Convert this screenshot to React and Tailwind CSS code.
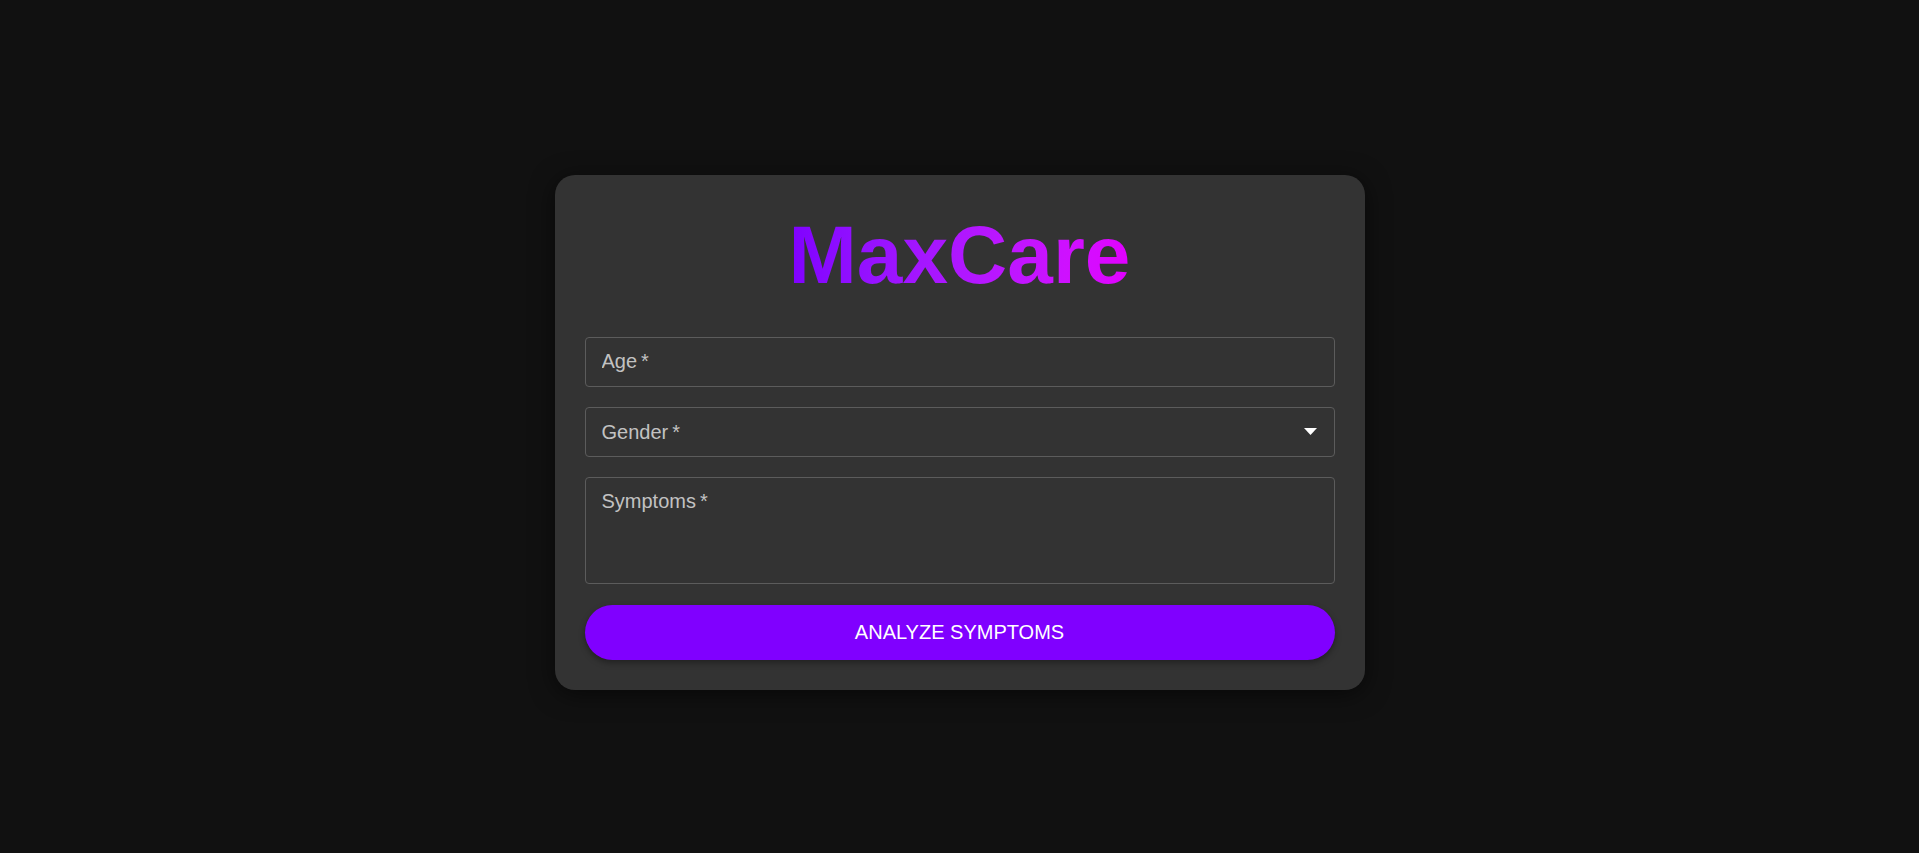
import React, { useState } from 'react';

const font = { fontFamily: '"Liberation Sans", Arial, sans-serif' };

const fieldBox =
  'w-full rounded-[4px] border border-[#5c5c5c] bg-transparent text-[20px] text-[#e0e0e0] outline-none placeholder:text-[#c2c2c2]';

const App = () => {
  const [age, setAge] = useState('');
  const [symptoms, setSymptoms] = useState('');

  return (
    <div
      className="flex min-h-screen items-center justify-center bg-[#111111] pt-[12px]"
      style={font}
    >
      <div className="w-[810px] rounded-[20px] bg-[#333333] p-[30px] shadow-[0_4px_24px_rgba(0,0,0,0.55)]">
        <h1 className="mb-[31px] text-center text-[82px] font-bold leading-[1.23]">
          <span className="inline-block bg-gradient-to-r from-[#7f00ff] to-[#e100ff] bg-clip-text text-transparent">
            MaxCare
          </span>
        </h1>

        <form
          className="flex flex-col gap-[20px]"
          onSubmit={(event) => event.preventDefault()}
        >
          <input
            className={`${fieldBox} h-[50px] px-[16px]`}
            placeholder={'Age\u2009*'}
            value={age}
            onChange={(event) => setAge(event.target.value)}
          />

          <div className="flex h-[50px] w-full items-center justify-between rounded-[4px] border border-[#5c5c5c] pl-[16px] pr-[17px]">
            <span className="text-[20px] text-[#c2c2c2]">Gender&thinsp;*</span>
            <svg width="13" height="7" viewBox="0 0 13 7">
              <path d="M0 0h13L6.5 7z" fill="#ffffff" />
            </svg>
          </div>

          <textarea
            className={`${fieldBox} h-[107px] resize-none px-[16px] pt-[12px] leading-[22px]`}
            placeholder={'Symptoms\u2009*'}
            value={symptoms}
            onChange={(event) => setSymptoms(event.target.value)}
          />

          <button
            type="submit"
            className="mt-px h-[55px] w-full rounded-full bg-[#8000ff] text-[20px] text-white shadow-[0_3px_6px_rgba(0,0,0,0.35)]"
          >
            ANALYZE SYMPTOMS
          </button>
        </form>
      </div>
    </div>
  );
};

export default App;
